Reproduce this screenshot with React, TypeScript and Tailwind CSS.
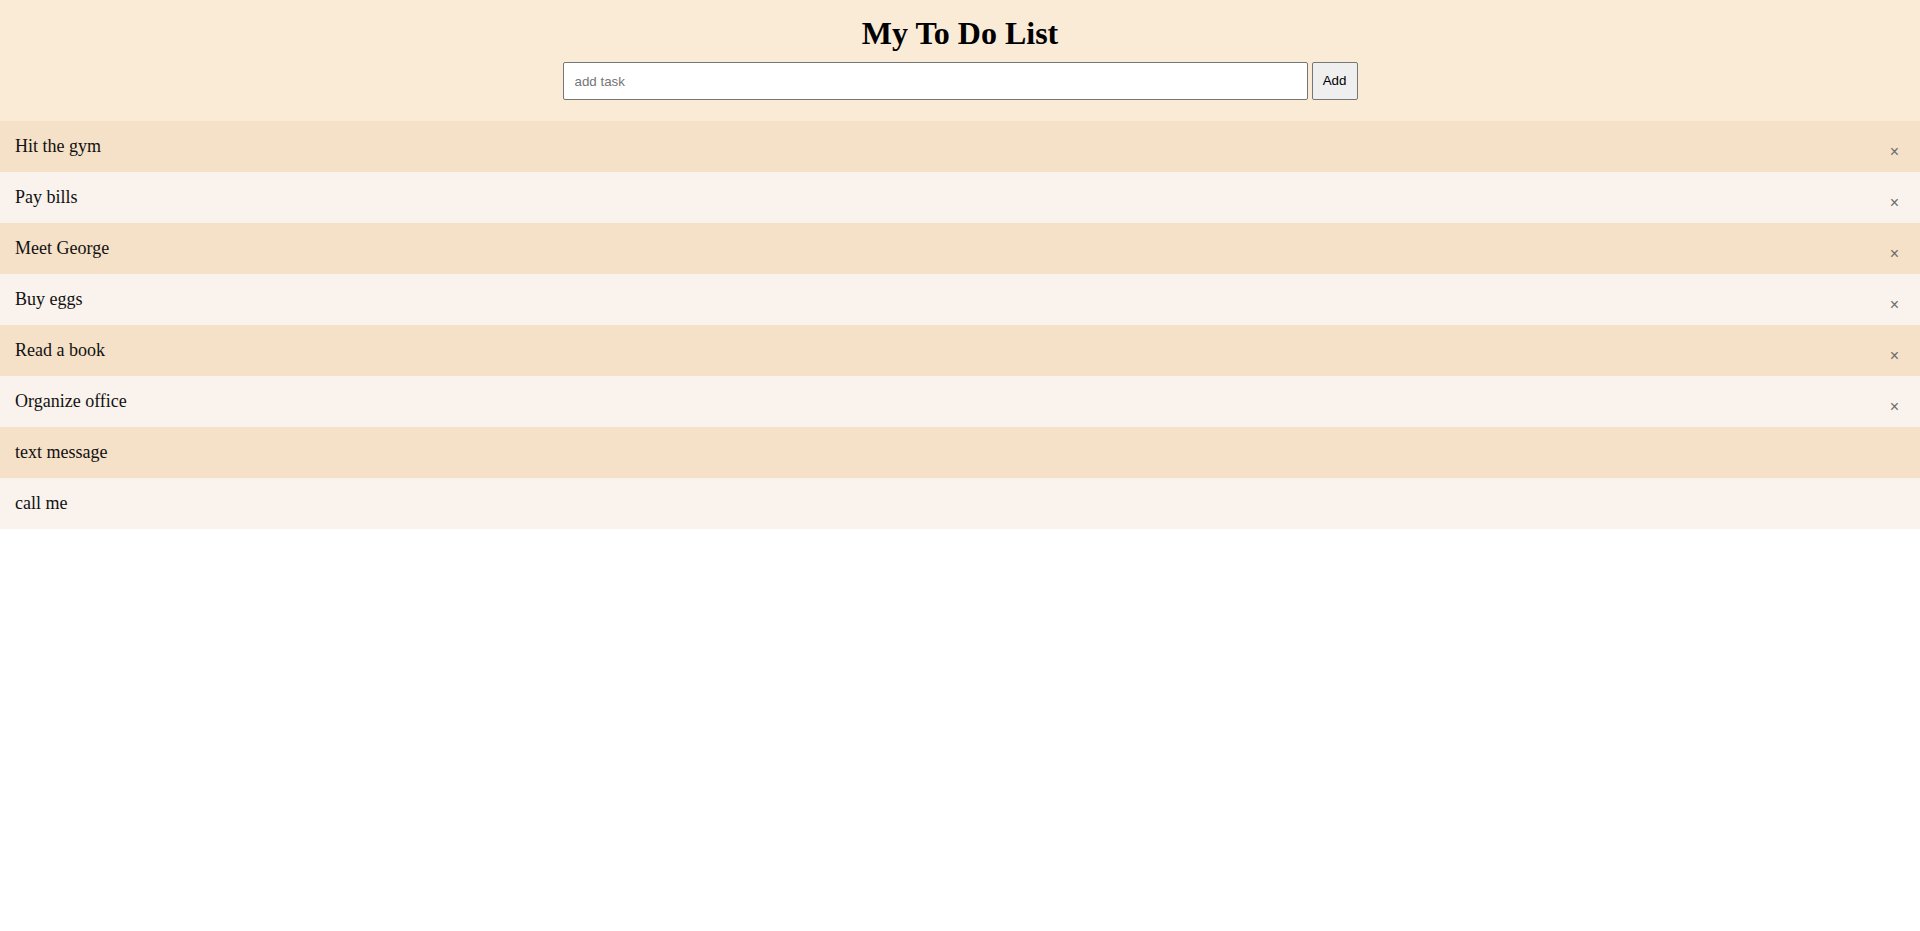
import React from "react";

const tasks = [
  { text: "Hit the gym", close: true },
  { text: "Pay bills", close: true },
  { text: "Meet George", close: true },
  { text: "Buy eggs", close: true },
  { text: "Read a book", close: true },
  { text: "Organize office", close: true },
  { text: "text message", close: false },
  { text: "call me", close: false },
];

export default function App() {
  return (
    <div className="w-full min-h-[931px] bg-white">
      <div className="bg-[#faebd7] pt-[15px] pb-[21px] flex flex-col items-center">
        <h1 className="font-['Liberation_Serif',serif] text-[32px] font-bold leading-[37px] text-black">
          My To Do List
        </h1>
        <div className="mt-[10px] flex items-center gap-[4px]">
          <input
            type="text"
            placeholder="add task"
            className="w-[745px] h-[38px] bg-white border border-[#767676] rounded-[2px] pl-[11px] font-['Liberation_Sans',sans-serif] text-[13.33px] text-black placeholder:text-[#757575] outline-none"
          />
          <button className="w-[46px] px-0 h-[38px] bg-[#efefef] border border-[#767676] rounded-[2px] font-['Liberation_Sans',sans-serif] text-[13.33px] text-black">
            Add
          </button>
        </div>
      </div>
      <ul>
        {tasks.map((t, i) => (
          <li
            key={t.text}
            className={`h-[51px] flex items-center justify-between pl-[15px] font-['Liberation_Serif',serif] text-[18px] text-[#111] ${
              i % 2 === 0 ? "bg-[#f5e0c8]" : "bg-[#faf2ec]"
            }`}
          >
            <span>{t.text}</span>
            {t.close && (
              <span className="mt-[10px] mr-[21px] font-['Liberation_Sans',sans-serif] text-[16px] leading-none text-[#6b6b6b]">
                ×
              </span>
            )}
          </li>
        ))}
      </ul>
    </div>
  );
}
